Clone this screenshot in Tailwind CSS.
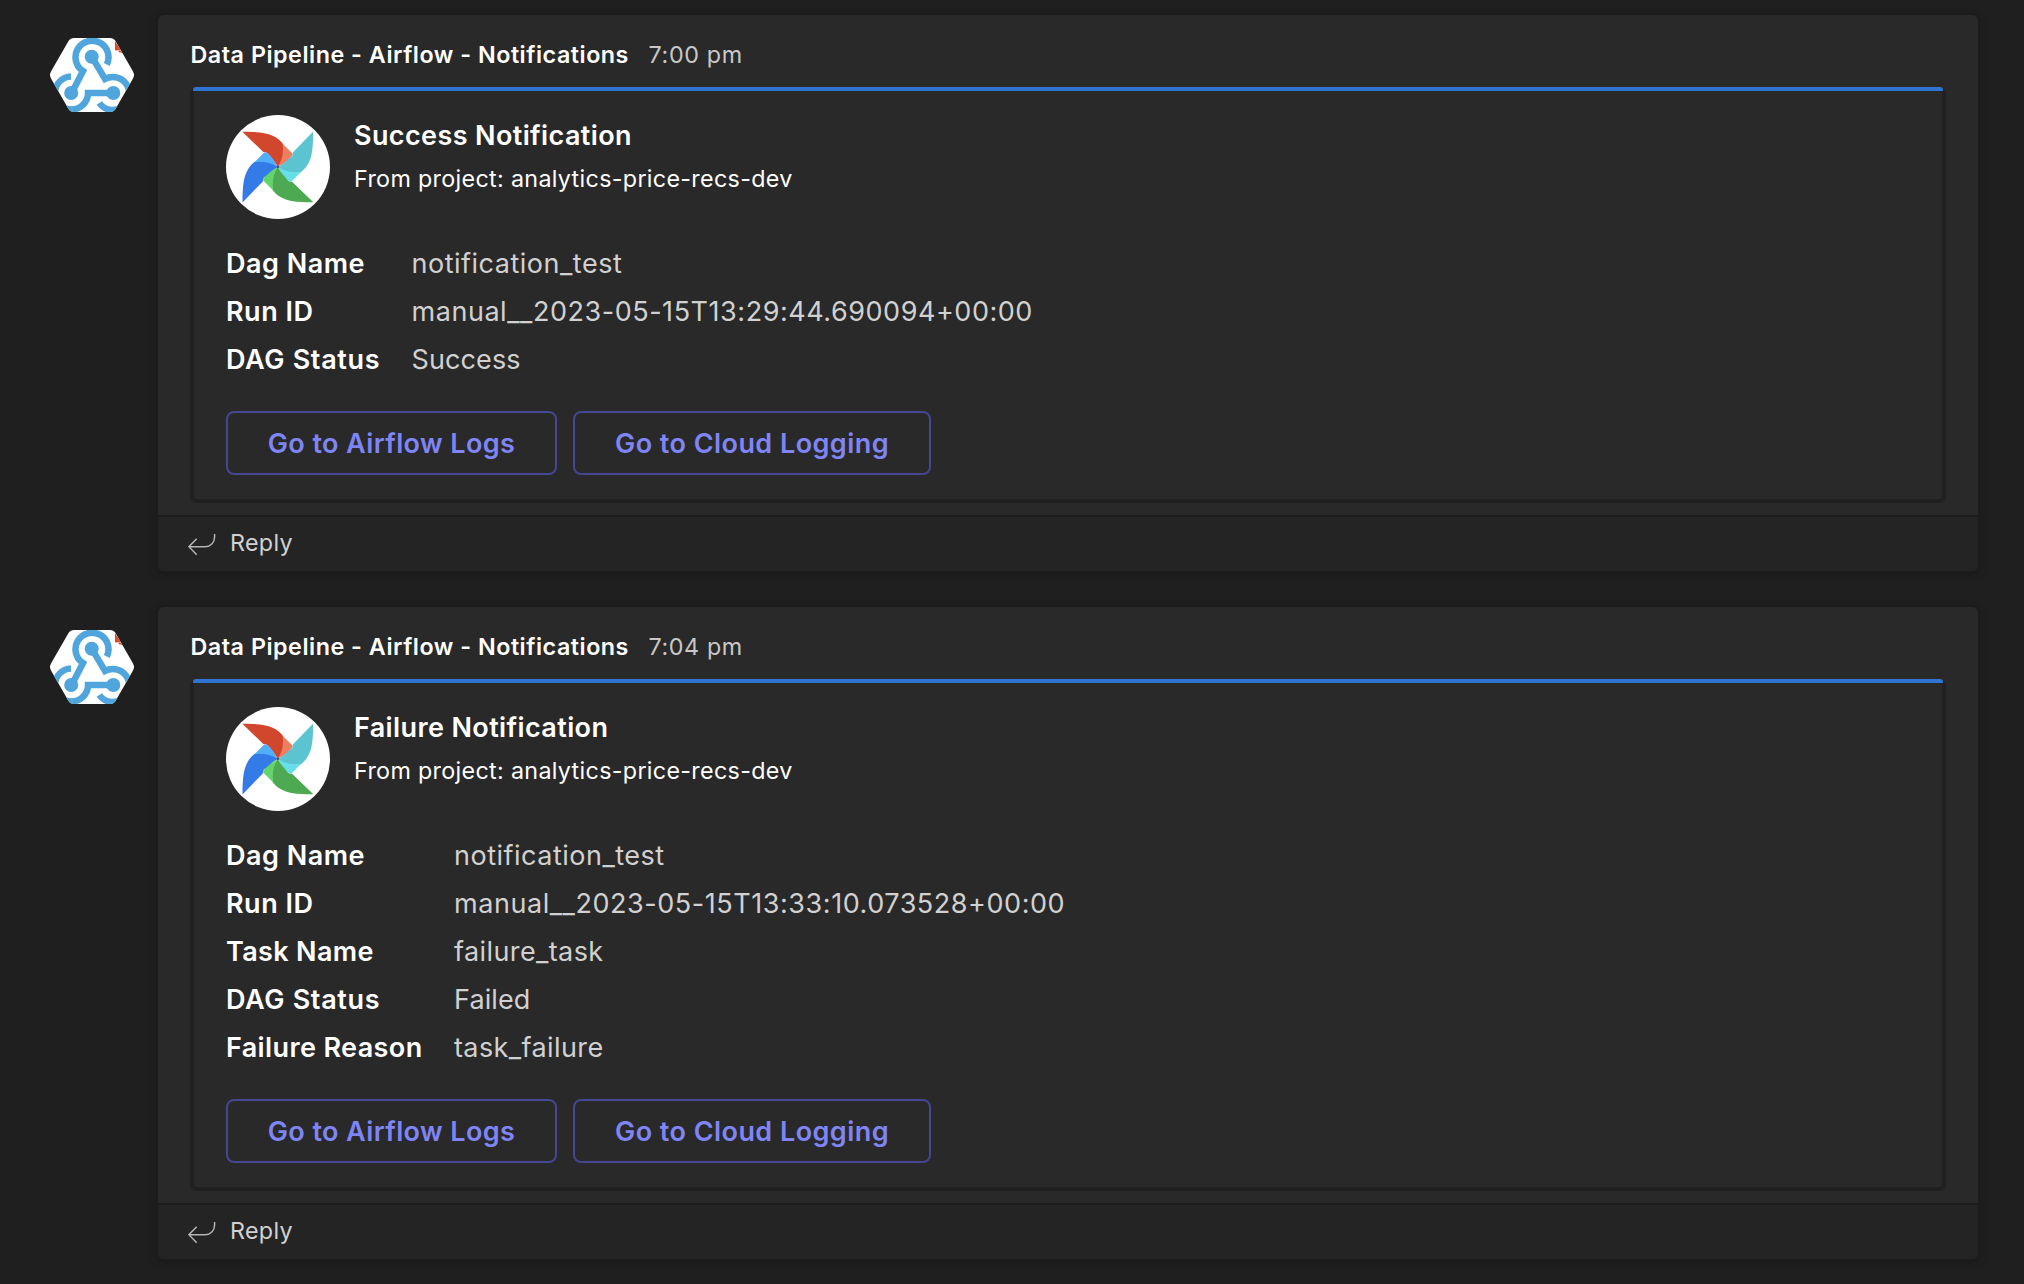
<!DOCTYPE html>
<html lang="en">
<head>
<meta charset="utf-8">
<title>Notifications</title>
<script src="https://cdn.jsdelivr.net/npm/@tailwindcss/browser@4"></script>
</head>
<body class="bg-[#1f1f1f] min-h-screen overflow-hidden font-['Inter',sans-serif] whitespace-nowrap">
<svg class="absolute size-0">
  <defs>
    <clipPath id="hex"><path d="M24 0H60Q63.500 0 65.500 3L83 33.500Q85 37 83 40.500L65.500 71Q63.500 74 60 74H24Q20.500 74 18.500 71L1 40.500Q-1 37 1 33.500L18.500 3Q20.500 0 24 0Z"/></clipPath>
    <symbol id="webhook" viewBox="0 0 84 74">
      <g clip-path="url(#hex)">
        <rect width="84" height="74" fill="#fff"/>
        <g fill="none" stroke="#4fa5dc" stroke-width="6.500">
          <path d="M56.800 26.500A16.500 16.500 0 1 0 33 33L21.700 55"/>
          <path d="M21 38.500A16.500 16.500 0 1 0 38 55H63"/>
          <path d="M49.300 65A16.500 16.500 0 1 0 55 41L41.700 18.700"/>
        </g>
        <g fill="#4fa5dc"><circle cx="41.700" cy="18.700" r="7"/><circle cx="21.200" cy="55" r="7"/><circle cx="63.300" cy="55" r="7"/></g>
        <path d="M65 3L71 12L65 12.500ZM68 14L70 12L73 15Z" fill="#dc4a2c"/>
      </g>
    </symbol>
    <g id="sail"><path d="M82 80C112 80 152 81 173 92C188 99 198 108 204 117C208 142 204 168 188.500 186C181 170 168 158 157 144Q153 141 145 141Z"/></g>
    <g id="fold"><path d="M203 116L231 144Q234 147 232 151C222 167 206 176 188.500 186C203 162 206 142 203 116Z"/></g>
    <symbol id="pinwheel" viewBox="33 30 312 312">
      <circle cx="189" cy="186" r="156" fill="#fff"/>
      <use href="#sail" fill="#d1472e"/><use href="#fold" fill="#ef7d61"/>
      <g transform="rotate(90 188.500 186)"><use href="#sail" fill="#5bc4d0"/><use href="#fold" fill="#66dfea"/></g>
      <g transform="rotate(180 188.500 186)"><use href="#sail" fill="#4eaa52"/><use href="#fold" fill="#63d46c"/></g>
      <g transform="rotate(270 188.500 186)"><use href="#sail" fill="#357be8"/><use href="#fold" fill="#51aef8"/></g>
      <circle cx="188.500" cy="186" r="3.500" fill="#4a4848"/>
    </symbol>
    <symbol id="reply" viewBox="0 0 28 24">
      <path d="M26.600 1V4C26.600 9.500 22.500 13.700 17 13.700H1.200M8.700 5.700L0.900 13.700L8.700 21.700" fill="none" stroke="#b4b4b4" stroke-width="1.500"/>
    </symbol>
  </defs>
</svg>

<main class="flex flex-col gap-9 pt-[15px] pl-[50px] pr-[46px]">
  <article class="flex items-start gap-6">
    <svg class="mt-[23px] h-[74px] w-[84px] shrink-0"><use href="#webhook"/></svg>
    <div class="flex-1 rounded-[6px] bg-[#292929] shadow-[0_0_0_2px_#1c1c1c,0_3px_10px_rgba(0,0,0,0.25)]">
      <header class="flex h-[72px] items-center pt-[9px] pl-[32.5px] text-[23.3px]">
        <span class="w-[458px] font-semibold tracking-[0.52px] text-white">Data Pipeline - Airflow - Notifications</span>
        <time class="tracking-[0.65px] text-[#c8c8c8]">7:00 pm</time>
      </header>
      <section class="relative mx-8 rounded-[7px] border-4 border-[#202020] pt-6 pr-8 pb-6 pl-8">
        <div class="absolute -top-1 -right-px -left-px h-1 rounded-t-[3px] bg-[#2f74d0]"></div>
        <div class="flex h-[104px] gap-6">
          <svg class="size-[104px] shrink-0"><use href="#pinwheel"/></svg>
          <div class="text-white">
            <h2 class="text-[27px] leading-[42px] font-semibold tracking-[0.38px]">Success Notification</h2>
            <p class="text-[23.3px] leading-[43px] tracking-[0.32px]">From project: analytics-price-recs-dev</p>
          </div>
        </div>
        <dl class="mt-[21px] grid grid-cols-[185.5px_1fr] text-[27px] leading-[48px]">
          <dt class="font-semibold tracking-[0.5px] text-white">Dag Name</dt><dd class="tracking-[0.51px] text-[#d1d1d1]">notification_test</dd>
          <dt class="font-semibold tracking-[0.5px] text-white">Run ID</dt><dd class="tracking-[0.54px] text-[#d1d1d1]">manual__2023-05-15T13:29:44.690094+00:00</dd>
          <dt class="font-semibold tracking-[0.65px] text-white">DAG Status</dt><dd class="tracking-[0.1px] text-[#d1d1d1]">Success</dd>
        </dl>
        <div class="mt-[27px] flex gap-4 text-[27px] font-semibold text-[#7f85f5]">
          <button class="h-16 w-[331px] rounded-[8px] border-2 border-[#444791] pt-[2px] tracking-[0.39px]">Go to Airflow Logs</button>
          <button class="h-16 w-[358px] rounded-[8px] border-2 border-[#444791] pt-[2px] tracking-[0.45px]">Go to Cloud Logging</button>
        </div>
      </section>
      <footer class="mt-3 flex h-14 items-center gap-[14px] rounded-b-[6px] border-t-2 border-[#1b1b1b] bg-[#242424] pb-[2px] pl-[30px] text-[23.3px] tracking-[0.3px] text-[#d1d1d1]">
        <svg class="mt-1 h-6 w-7"><use href="#reply"/></svg>
        <span>Reply</span>
      </footer>
    </div>
  </article>

  <article class="flex items-start gap-6">
    <svg class="mt-[23px] h-[74px] w-[84px] shrink-0"><use href="#webhook"/></svg>
    <div class="flex-1 rounded-[6px] bg-[#292929] shadow-[0_0_0_2px_#1c1c1c,0_3px_10px_rgba(0,0,0,0.25)]">
      <header class="flex h-[72px] items-center pt-[9px] pl-[32.5px] text-[23.3px]">
        <span class="w-[458px] font-semibold tracking-[0.52px] text-white">Data Pipeline - Airflow - Notifications</span>
        <time class="tracking-[0.6px] text-[#c8c8c8]">7:04 pm</time>
      </header>
      <section class="relative mx-8 rounded-[7px] border-4 border-[#202020] pt-6 pr-8 pb-6 pl-8">
        <div class="absolute -top-1 -right-px -left-px h-1 rounded-t-[3px] bg-[#2f74d0]"></div>
        <div class="flex h-[104px] gap-6">
          <svg class="size-[104px] shrink-0"><use href="#pinwheel"/></svg>
          <div class="text-white">
            <h2 class="text-[27px] leading-[42px] font-semibold tracking-[0.38px]">Failure Notification</h2>
            <p class="text-[23.3px] leading-[43px] tracking-[0.32px]">From project: analytics-price-recs-dev</p>
          </div>
        </div>
        <dl class="mt-[21px] grid grid-cols-[228px_1fr] text-[27px] leading-[48px]">
          <dt class="font-semibold tracking-[0.5px] text-white">Dag Name</dt><dd class="tracking-[0.5px] text-[#d1d1d1]">notification_test</dd>
          <dt class="font-semibold tracking-[0.5px] text-white">Run ID</dt><dd class="tracking-[0.55px] text-[#d1d1d1]">manual__2023-05-15T13:33:10.073528+00:00</dd>
          <dt class="font-semibold tracking-[0.35px] text-white">Task Name</dt><dd class="tracking-[0.4px] text-[#d1d1d1]">failure_task</dd>
          <dt class="font-semibold tracking-[0.65px] text-white">DAG Status</dt><dd class="tracking-[0.1px] text-[#d1d1d1]">Failed</dd>
          <dt class="font-semibold tracking-[0.38px] text-white">Failure Reason</dt><dd class="tracking-[0.4px] text-[#d1d1d1]">task_failure</dd>
        </dl>
        <div class="mt-[27px] flex gap-4 text-[27px] font-semibold text-[#7f85f5]">
          <button class="h-16 w-[331px] rounded-[8px] border-2 border-[#444791] pt-[2px] tracking-[0.39px]">Go to Airflow Logs</button>
          <button class="h-16 w-[358px] rounded-[8px] border-2 border-[#444791] pt-[2px] tracking-[0.45px]">Go to Cloud Logging</button>
        </div>
      </section>
      <footer class="mt-3 flex h-14 items-center gap-[14px] rounded-b-[6px] border-t-2 border-[#1b1b1b] bg-[#242424] pb-[2px] pl-[30px] text-[23.3px] tracking-[0.3px] text-[#d1d1d1]">
        <svg class="mt-1 h-6 w-7"><use href="#reply"/></svg>
        <span>Reply</span>
      </footer>
    </div>
  </article>
</main>
</body>
</html>
